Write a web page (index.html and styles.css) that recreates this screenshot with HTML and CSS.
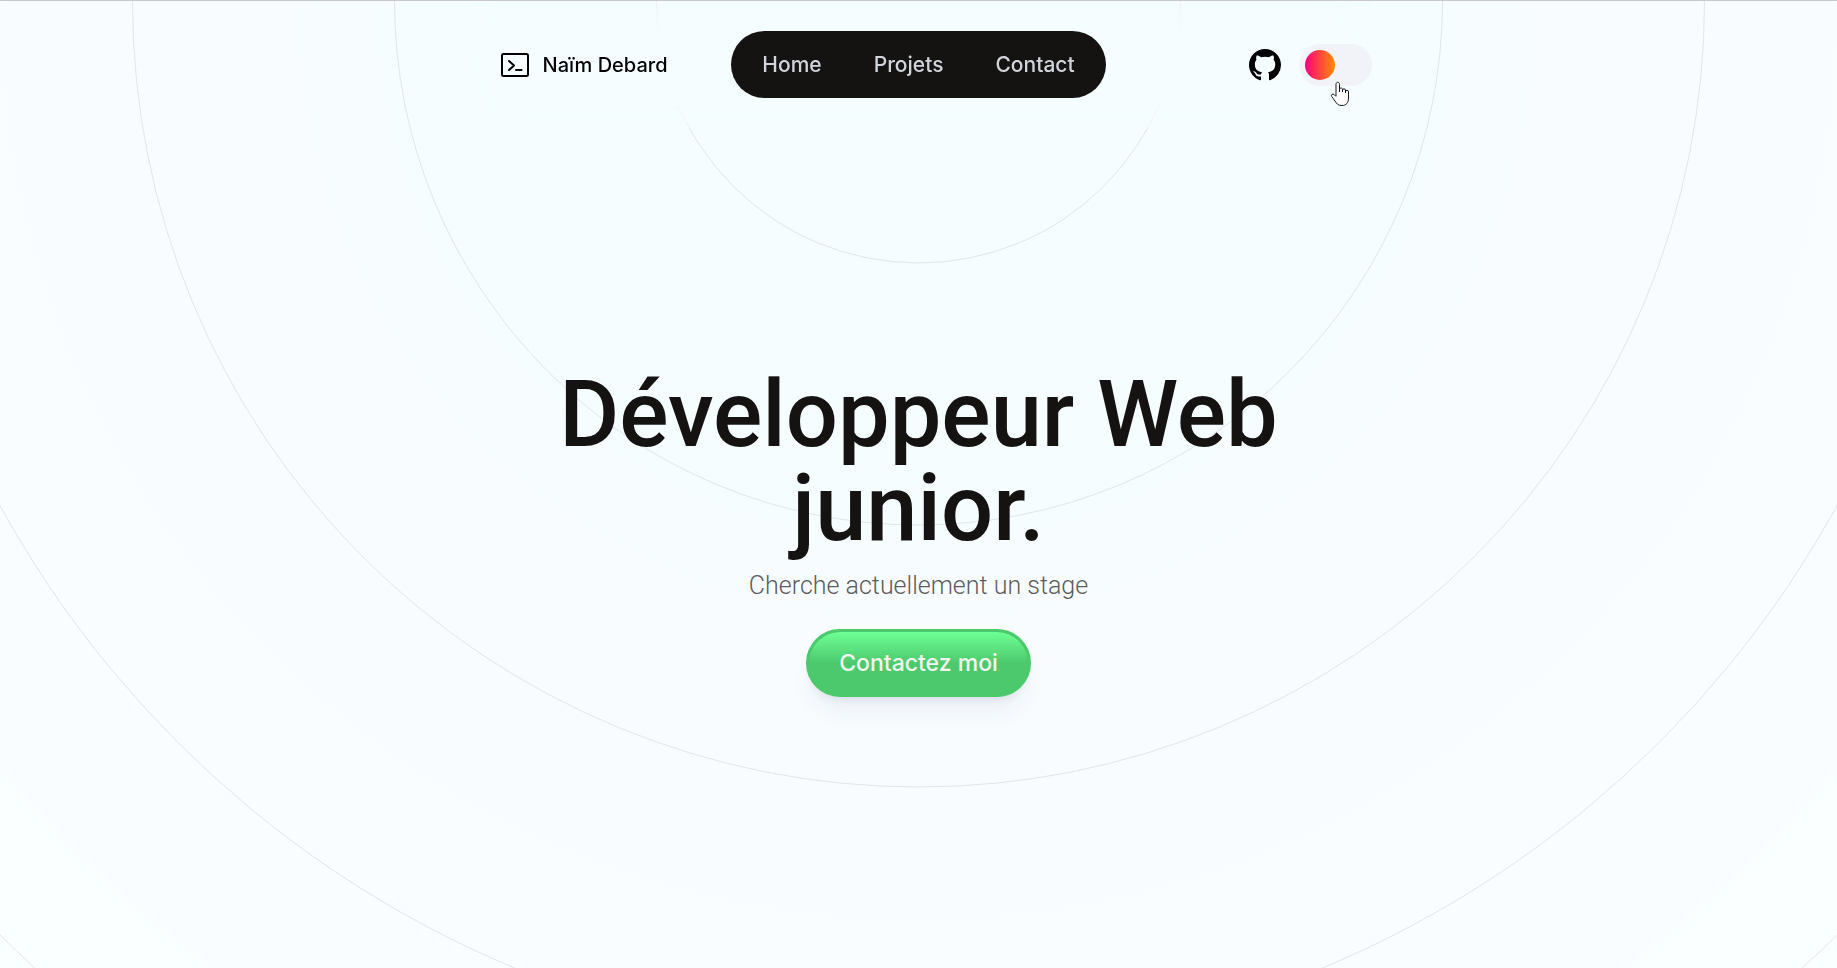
FILE: index.html
```html
<!DOCTYPE html>
<html lang="fr">
<head>
<meta charset="utf-8">
<meta name="viewport" content="width=device-width, initial-scale=1">
<title>Naïm Debard</title>
<link rel="stylesheet" href="styles.css">
</head>
<body>
<div class="page">
  <svg class="rings" aria-hidden="true">
    <g class="rings-group">
      <circle r="262"/><circle r="524"/><circle r="786"/><circle r="1048"/><circle r="1310"/>
    </g>
  </svg>
  <header class="header">
    <a class="brand" href="#">
      <svg class="brand-icon" viewBox="0 0 32 32" aria-hidden="true">
        <rect x="3" y="5" width="26" height="22" rx="1.500"/>
        <path d="M10 12l5 4.500l-5 4.500M17 21h5.500"/>
      </svg>
      <span>Naïm Debard</span>
    </a>
    <nav class="nav">
      <a href="#">Home</a>
      <a href="#">Projets</a>
      <a href="#">Contact</a>
    </nav>
    <div class="actions">
      <a class="github" href="#" aria-label="GitHub">
        <svg viewBox="0 0 16 16" aria-hidden="true"><path d="M8 0C3.58 0 0 3.58 0 8c0 3.54 2.29 6.53 5.47 7.59.4.07.55-.17.55-.38 0-.19-.01-.82-.01-1.49-2.01.37-2.53-.49-2.69-.94-.09-.23-.48-.94-.82-1.13-.28-.15-.68-.52-.01-.53.63-.01 1.08.58 1.23.82.72 1.21 1.87.87 2.33.66.07-.52.28-.87.51-1.07-1.78-.2-3.64-.89-3.64-3.95 0-.87.31-1.59.82-2.15-.08-.2-.36-1.02.08-2.12 0 0 .67-.21 2.2.82.64-.18 1.32-.27 2-.27s1.36.09 2 .27c1.53-1.04 2.2-.82 2.2-.82.44 1.1.16 1.92.08 2.12.51.56.82 1.27.82 2.15 0 3.07-1.87 3.75-3.65 3.95.29.25.54.73.54 1.48 0 1.07-.01 1.93-.01 2.2 0 .21.15.46.55.38A8.01 8.01 0 0 0 16 8c0-4.42-3.58-8-8-8z"/></svg>
      </a>
      <label class="toggle">
        <input type="checkbox" aria-label="Thème sombre">
        <svg class="cursor" viewBox="0 0 20 26" aria-hidden="true"><path d="M6 15V3.500C6 .5 9.500.5 9.500 3.500V11V8.500C9.500 6.500 12.500 6.500 12.500 8.500V11V9C12.500 7.500 15.500 7.500 15.500 9V12V10.500C15.500 9 18.500 9 18.500 10.500V17C18.500 22 16 24.500 12 24.500C8 24.500 7 23 5 20L1.700 15.500C.5 13.500 3 12.500 4 13.500L6 15.500"/></svg>
      </label>
    </div>
  </header>
  <main class="hero">
    <h1 class="title">Développeur Web junior.</h1>
    <p class="subtitle">Cherche actuellement un stage</p>
    <button class="cta" type="button">Contactez moi</button>
  </main>
</div>
</body>
</html>
```
FILE: styles.css
```css
* {
  box-sizing: border-box;
}

body {
  margin: 0;
  font-family: Inter, "Liberation Sans", sans-serif;
  color: #151311;
}

.page {
  position: relative;
  min-height: 100vh;
  overflow: hidden;
  border-top: 1px solid #c8c8c8;
  background: radial-gradient(circle at 50% 0, #f5fdff 0, #f5fdff 480px, #f8fcff 640px, #f8fcff 910px, #f9fdff 920px, #f9fdff 1190px, #faffff 1210px);
}

.rings {
  position: absolute;
  inset: 0;
  width: 100%;
  height: 100%;
}

.rings-group {
  transform: translate(50%, 0);
  fill: none;
  stroke: #e2e6e9;
}

.header {
  position: relative;
  display: grid;
  grid-template-columns: 1fr auto 1fr;
  align-items: center;
  max-width: 906px;
  margin: 0 auto;
  padding: 30px 0;
  font-size: 20px;
  font-weight: 500;
  line-height: 28px;
  backdrop-filter: blur(24px);
}

.brand {
  display: flex;
  align-items: center;
  gap: 12px;
  padding-left: 33px;
  color: #000;
  text-decoration: none;
}

.brand-icon {
  width: 32px;
  height: 32px;
  fill: none;
  stroke: #000;
  stroke-width: 2;
  stroke-linecap: round;
  stroke-linejoin: round;
}

.nav {
  display: flex;
  gap: 52px;
  padding: 20px 31px;
  border-radius: 34px;
  background: #151311;
  font-size: 21px;
  line-height: 27px;
}

.nav a {
  color: #d1d5db;
  text-decoration: none;
}

.actions {
  display: flex;
  align-items: center;
  justify-content: flex-end;
  gap: 18px;
}

.github {
  display: flex;
}

.github svg {
  width: 32px;
  height: 32px;
}

.toggle {
  position: relative;
  display: flex;
}

.toggle input {
  appearance: none;
  width: 73px;
  height: 42px;
  margin: 0;
  padding: 6px;
  border-radius: 21px;
  background: #f1f3f9;
  cursor: pointer;
}

.toggle input::before {
  content: "";
  display: block;
  width: 30px;
  height: 30px;
  border-radius: 50%;
  background: linear-gradient(90deg, #ff0080, #ff8c00);
}

.toggle input:checked::before {
  margin-left: auto;
}

.cursor {
  position: absolute;
  top: 37px;
  left: 31px;
  width: 20px;
  height: 26px;
  fill: #fff;
  stroke: #15152b;
  pointer-events: none;
}

.hero {
  position: relative;
  display: flex;
  flex-direction: column;
  align-items: center;
  padding: 240px 24px 100px;
  text-align: center;
}

.title {
  max-width: 800px;
  margin: 0;
  font-family: Roboto, "Liberation Sans", sans-serif;
  font-size: 92px;
  font-weight: 500;
  line-height: 94px;
}

.subtitle {
  margin: 12px 0 25px;
  font-family: Roboto, "Liberation Sans", sans-serif;
  font-size: 25px;
  font-weight: 300;
  line-height: 36px;
  color: #5c5c5c;
}

.cta {
  padding: 17px 30px;
  border: 3px solid #4dc96d;
  border-radius: 34px;
  background: linear-gradient(#6dff95, #4dc96d 50%) padding-box, #4dc96d;
  box-shadow: 0 20px 25px -5px rgb(40 60 90 / 5%), 0 8px 10px -6px rgb(40 60 90 / 12%);
  color: #f4f8ee;
  font: 500 23px/28px Inter, "Liberation Sans", sans-serif;
  cursor: pointer;
}
```
